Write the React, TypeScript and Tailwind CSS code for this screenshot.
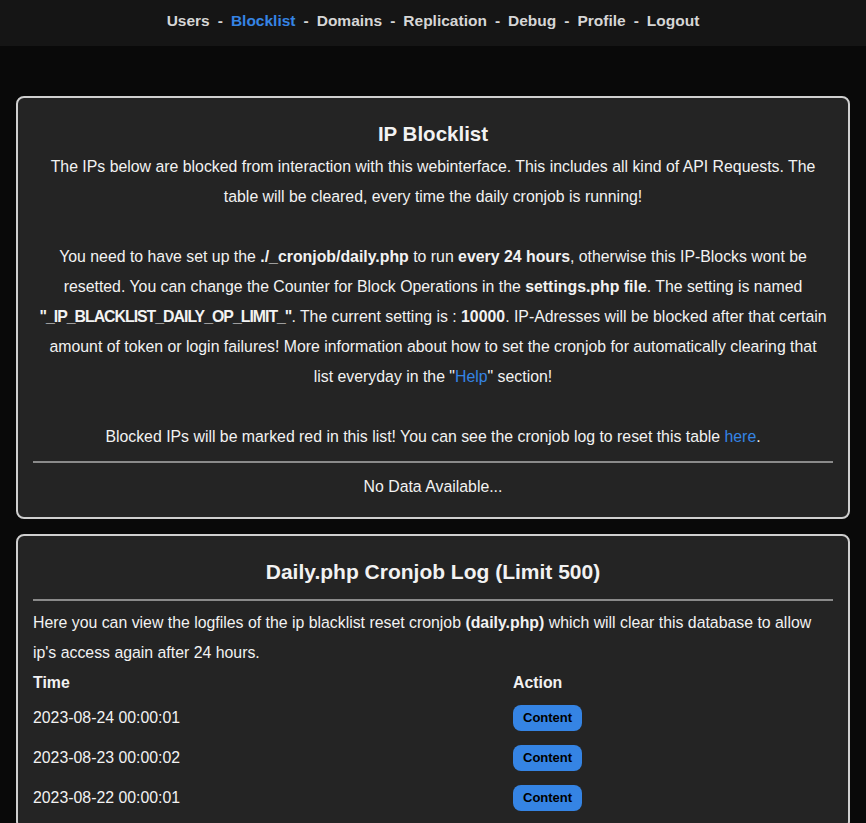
import React from "react";

const navItems = ["Users", "Blocklist", "Domains", "Replication", "Debug", "Profile", "Logout"];

const logs = ["2023-08-24 00:00:01", "2023-08-23 00:00:02", "2023-08-22 00:00:01"];

export default function App() {
  return (
    <div className="min-h-screen bg-[#090909] text-[#f2f2f2] font-['Liberation_Sans',Arial,sans-serif] text-[15.85px]">
      {/* Top navigation */}
      <nav className="h-[46px] bg-[#151515] flex items-center justify-center pb-[4px] text-[15.5px]">
        {navItems.map((item, i) => (
          <React.Fragment key={item}>
            {i > 0 && <span className="mx-[8px] text-[#d6d6d6] font-bold">-</span>}
            <a className={`font-bold ${item === "Blocklist" ? "text-[#3584e4]" : "text-[#d6d6d6]"}`}>{item}</a>
          </React.Fragment>
        ))}
      </nav>

      <div className="px-[16px] pt-[50px] flex flex-col gap-[15px]">
        {/* IP Blocklist card */}
        <section className="rounded-[8px] border-2 border-[#cfcfcf] bg-[#242424] px-[15px] pt-[18px] pb-[20px] text-center">
          <h1 className="text-[20.5px] font-bold leading-[36px]">IP Blocklist</h1>
          <p className="leading-[30px]">
            The IPs below are blocked from interaction with this webinterface. This includes all kind of API Requests. The
            table will be cleared, every time the daily cronjob is running!
            <br />
            <br />
            You need to have set up the <b>./_cronjob/daily.php</b> to run <b>every 24 hours</b>, otherwise this IP-Blocks
            wont be resetted. You can change the Counter for Block Operations in the <b>settings.php file</b>. The setting
            is named <b className="tracking-[-1px]">"_IP_BLACKLIST_DAILY_OP_LIMIT_"</b>. The current setting is :{" "}
            <b>10000</b>. IP-Adresses will be blocked after that certain amount of token or login failures! More
            information about how to set the cronjob for automatically clearing that
            <br />
            list everyday in the "<a className="text-[#3584e4]">Help</a>" section!
            <br />
            <br />
            Blocked IPs will be marked red in this list! You can see the cronjob log to reset this table{" "}
            <a className="text-[#3584e4]">here</a>.
          </p>
          <hr className="mt-[9px] border-0 h-[2px] bg-[#8a8a8a]" />
          <p className="mt-[14px] leading-[20px]">No Data Available...</p>
        </section>

        {/* Cronjob log card */}
        <section className="rounded-[8px] border-2 border-[#cfcfcf] bg-[#242424] px-[15px] pt-[20px] pb-[10px]">
          <h2 className="text-center text-[21px] font-bold leading-[32px]">Daily.php Cronjob Log (Limit 500)</h2>
          <hr className="mt-[11px] border-0 h-[2px] bg-[#8a8a8a]" />
          <p className="mt-[7px] leading-[30px]">
            Here you can view the logfiles of the ip blacklist reset cronjob <b>(daily.php)</b> which will clear this
            database to allow ip's access again after 24 hours.
          </p>
          <div className="grid grid-cols-[480px_1fr]">
            <div className="font-bold h-[30px] flex items-center">Time</div>
            <div className="font-bold h-[30px] flex items-center">Action</div>
            {logs.map((t) => (
              <React.Fragment key={t}>
                <div className="h-[40px] flex items-center">{t}</div>
                <div className="h-[40px] flex items-center">
                  <button className="h-[26px] px-[10px] rounded-[8px] bg-[#3584e4] text-black text-[13px] font-bold">
                    Content
                  </button>
                </div>
              </React.Fragment>
            ))}
          </div>
        </section>
      </div>
    </div>
  );
}
